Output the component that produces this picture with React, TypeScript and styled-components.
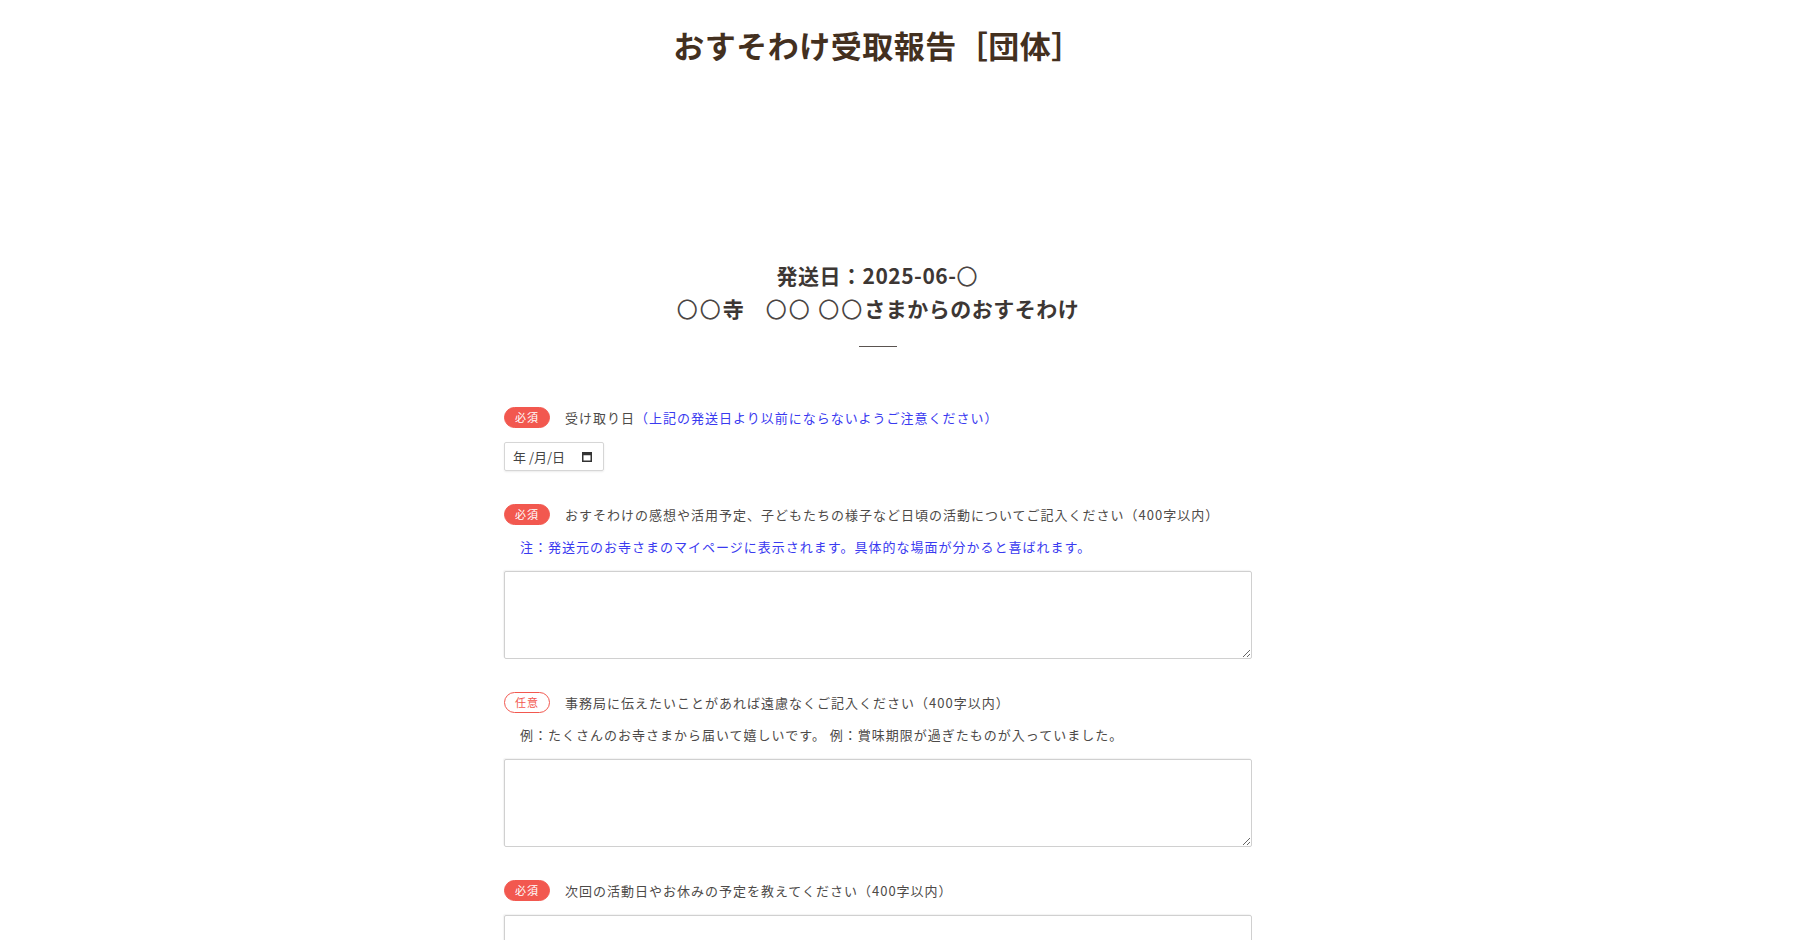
import React from "react";
import styled, { createGlobalStyle } from "styled-components";

const GlobalStyle = createGlobalStyle`
    html, body {
        margin: 0;
        padding: 0;
        background: #ffffff;
    }
    body {
        font-family: "Noto Sans CJK JP", "Noto Sans", sans-serif;
        color: #4d4a48;
    }
`;

const Page = styled.main`
    padding: 22px 38px 40px 0;
`;

const Title = styled.h1`
    margin: 0;
    text-align: center;
    font-size: 31px;
    line-height: 45px;
    font-weight: 700;
    color: #43301f;
    letter-spacing: 0.5px;
`;

const Shipment = styled.section`
    margin-top: 192px;
    text-align: center;
`;

const ShipLine = styled.p`
    margin: 0;
    font-size: 21px;
    line-height: 33px;
    font-weight: 700;
    letter-spacing: 0.5px;
    color: #3d3734;
`;

// the circle placeholders are drawn thin in the original
const Blank = styled.span`
    font-weight: 400;
    letter-spacing: 2px;
    color: #4a4442;
`;

const Divider = styled.hr`
    width: 38px;
    margin: 21px auto 0;
    border: none;
    border-top: 1px solid #5a5350;
`;

const Form = styled.form`
    width: 748px;
    margin: 59px auto 0;
`;

const Item = styled.div`
    margin-bottom: 32px;
`;

const LabelRow = styled.div`
    display: flex;
    align-items: center;
    gap: 15px;
    height: 22px;
`;

const Badge = styled.span<{ $optional?: boolean }>`
    display: inline-flex;
    align-items: center;
    justify-content: center;
    flex-shrink: 0;
    width: 46px;
    height: 21px;
    box-sizing: border-box;
    border-radius: 11px;
    font-size: 11px;
    letter-spacing: 1px;
    background: ${(p) => (p.$optional ? "#ffffff" : "#f2584f")};
    color: ${(p) => (p.$optional ? "#f2584f" : "#ffffff")};
    border: 1px solid #f2584f;
`;

const LabelText = styled.span`
    font-size: 13px;
    letter-spacing: 1px;
    color: #4d4a48;
`;

const Caution = styled.span`
    color: #3a3af0;
`;

const Note = styled.p<{ $blue?: boolean }>`
    margin: 12px 0 0;
    padding-left: 16px;
    font-size: 13px;
    line-height: 20px;
    letter-spacing: 1px;
    color: ${(p) => (p.$blue ? "#3a3af0" : "#4d4a48")};
`;

const Field = styled.div`
    margin-top: 14px;
`;

const DateBox = styled.div`
    display: inline-flex;
    align-items: center;
    justify-content: space-between;
    width: 100px;
    height: 29px;
    box-sizing: border-box;
    padding: 0 11px 0 8px;
    border: 1px solid #d6d6d6;
    border-radius: 2px;
    box-shadow: 0 1px 2px rgba(0, 0, 0, 0.08);
    font-size: 13px;
    color: #444;
`;

const TextArea = styled.textarea`
    display: block;
    width: 100%;
    height: 88px;
    box-sizing: border-box;
    border: 1px solid #d0d0d0;
    border-radius: 2px;
    box-shadow: -1px -1px 1px rgba(0, 0, 0, 0.05);
    padding: 8px;
    font-family: inherit;
    font-size: 13px;
    outline: none;
`;

function CalendarIcon() {
    return (
        <svg width="10" height="10" viewBox="0 0 10 10">
            <rect x="0.75" y="0.75" width="8.5" height="8.5" fill="none" stroke="#333" strokeWidth="1.5" />
            <rect x="0.75" y="0.75" width="8.5" height="2.5" fill="#333" />
        </svg>
    );
}

export default function App() {
    return (
        <>
            <GlobalStyle />
            <Page>
                <Title>おすそわけ受取報告［団体］</Title>
                <Shipment>
                    <ShipLine>
                        発送日：2025-06-<Blank>〇</Blank>
                    </ShipLine>
                    <ShipLine>
                        <Blank>〇〇</Blank>寺　<Blank>〇〇 〇〇</Blank>さまからのおすそわけ
                    </ShipLine>
                    <Divider />
                </Shipment>
                <Form onSubmit={(e) => e.preventDefault()}>
                    <Item>
                        <LabelRow>
                            <Badge>必須</Badge>
                            <LabelText>
                                受け取り日<Caution>（上記の発送日より以前にならないようご注意ください）</Caution>
                            </LabelText>
                        </LabelRow>
                        <Field>
                            <DateBox>
                                <span>年 /月/日</span>
                                <CalendarIcon />
                            </DateBox>
                        </Field>
                    </Item>
                    <Item>
                        <LabelRow>
                            <Badge>必須</Badge>
                            <LabelText>
                                おすそわけの感想や活用予定、子どもたちの様子など日頃の活動についてご記入ください（400字以内）
                            </LabelText>
                        </LabelRow>
                        <Note $blue>注：発送元のお寺さまのマイページに表示されます。具体的な場面が分かると喜ばれます。</Note>
                        <Field>
                            <TextArea />
                        </Field>
                    </Item>
                    <Item>
                        <LabelRow>
                            <Badge $optional>任意</Badge>
                            <LabelText>事務局に伝えたいことがあれば遠慮なくご記入ください（400字以内）</LabelText>
                        </LabelRow>
                        <Note>例：たくさんのお寺さまから届いて嬉しいです。 例：賞味期限が過ぎたものが入っていました。</Note>
                        <Field>
                            <TextArea />
                        </Field>
                    </Item>
                    <Item>
                        <LabelRow>
                            <Badge>必須</Badge>
                            <LabelText>次回の活動日やお休みの予定を教えてください（400字以内）</LabelText>
                        </LabelRow>
                        <Field>
                            <TextArea />
                        </Field>
                    </Item>
                </Form>
            </Page>
        </>
    );
}
